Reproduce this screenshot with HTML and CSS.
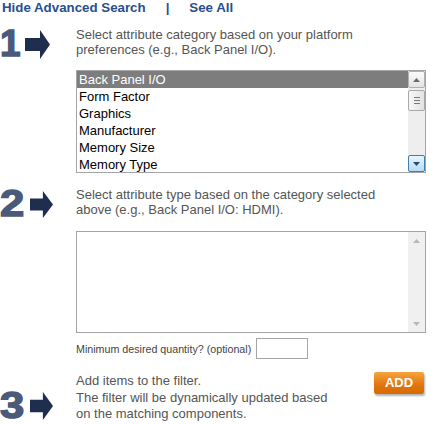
FILE: index.html
```html
<!DOCTYPE html>
<html>
<head>
<meta charset="utf-8">
<link rel="stylesheet" href="styles.css">
</head>
<body>
<div class="page">
  <div class="topnav">
    <a class="navlink" href="#">Hide Advanced Search</a><span class="sep">|</span><a class="navlink" href="#">See All</a>
  </div>

  <div class="step step-one">
    <div class="marker">
      <span class="num num-one">1</span>
      <svg class="arrow" width="25" height="29" viewBox="0 0 25 29"><path d="M0 8 H15 V0 L25 14.5 L15 29 V21 H0 Z" fill="#1f2d4e"/></svg>
    </div>
    <div class="content">
      <p class="hint">Select attribute category based on your platform<br>preferences (e.g., Back Panel I/O).</p>
      <div class="listbox">
        <div class="options">
          <div class="option selected">Back Panel I/O</div>
          <div class="option">Form Factor</div>
          <div class="option">Graphics</div>
          <div class="option">Manufacturer</div>
          <div class="option">Memory Size</div>
          <div class="option">Memory Type</div>
        </div>
        <div class="scrollbar">
          <div class="sb-btn sb-up"><svg width="7" height="4" viewBox="0 0 7 4"><path d="M0 4 L3.5 0 L7 4 Z" fill="#6a6a6a"/></svg></div>
          <div class="sb-thumb"><span class="grip"></span><span class="grip"></span><span class="grip"></span></div>
          <div class="sb-track"></div>
          <div class="sb-btn sb-down"><svg width="7" height="4" viewBox="0 0 7 4"><path d="M0 0 L7 0 L3.5 4 Z" fill="#2a4a6a"/></svg></div>
        </div>
      </div>
    </div>
  </div>

  <div class="step step-two">
    <div class="marker">
      <span class="num num-wide">2</span>
      <svg class="arrow" width="23" height="27" viewBox="0 0 25 29" preserveAspectRatio="none"><path d="M0 8 H14 V0 L25 14.5 L14 29 V21 H0 Z" fill="#1f2d4e"/></svg>
    </div>
    <div class="content">
      <p class="hint">Select attribute type based on the category selected<br>above (e.g., Back Panel I/O: HDMI).</p>
      <div class="listbox">
        <div class="options"></div>
        <div class="scrollbar disabled">
          <div class="sb-dis"><svg width="7" height="4" viewBox="0 0 7 4"><path d="M0 4 L3.5 0 L7 4 Z" fill="#b8b8b8"/></svg></div>
          <div class="sb-dis"><svg width="7" height="4" viewBox="0 0 7 4"><path d="M0 0 L7 0 L3.5 4 Z" fill="#b8b8b8"/></svg></div>
        </div>
      </div>
      <div class="qty">
        <span class="qty-label">Minimum desired quantity? (optional)</span>
        <span class="qty-input"></span>
      </div>
    </div>
  </div>

  <div class="step step-three">
    <div class="marker marker-bottom">
      <span class="num num-wide">3</span>
      <svg class="arrow" width="23" height="28" viewBox="0 0 25 29" preserveAspectRatio="none"><path d="M0 8 H14 V0 L25 14.5 L14 29 V21 H0 Z" fill="#1f2d4e"/></svg>
    </div>
    <div class="content content-row">
      <p class="hint hint-tall">Add items to the filter.<br>The filter will be dynamically updated based<br>on the matching components.</p>
      <span class="add-btn">ADD</span>
    </div>
  </div>
</div>
</body>
</html>
```

FILE: styles.css
```css
html, body {
  margin: 0;
  padding: 0;
  background: #ffffff;
}

.page {
  width: 434px;
  font-family: "Liberation Sans", Arial, sans-serif;
  font-size: 13px;
  color: #555555;
}

.topnav {
  padding-left: 2px;
  line-height: 16px;
  height: 16px;
  margin-bottom: 11px;
  font-weight: bold;
  font-size: 13.3px;
  color: #27508e;
}

.navlink {
  color: #27508e;
  text-decoration: none;
}

.sep {
  margin: 0 20px 0 20px;
  color: #27508e;
}

.step {
  display: flex;
  align-items: flex-start;
}

.marker {
  width: 76px;
  flex: none;
  height: 30px;
  display: flex;
  align-items: center;
  margin-top: 2px;
}

.marker-bottom {
  align-self: flex-end;
  margin-top: 0;
  margin-bottom: 2px;
}

.num {
  font-family: "Liberation Sans", Arial, sans-serif;
  font-weight: bold;
  font-size: 37px;
  line-height: 30px;
  color: #4b5a78;
  -webkit-text-stroke: 1.4px #4b5a78;
  display: inline-block;
  width: 30px;
  transform-origin: left center;
}

.num-one {
  width: 25px;
}

.num-wide {
  transform: scaleX(1.18);
}

.arrow {
  display: block;
  flex: none;
}

.content {
  width: 350px;
  flex: none;
}

.content-row {
  display: flex;
  align-items: flex-start;
}

.hint {
  margin: 0;
  line-height: 15px;
  color: #555555;
}

.hint-tall {
  line-height: 16.5px;
}

.listbox {
  margin-top: 13px;
  height: 101px;
  border: 1px solid #a5a5a5;
  display: flex;
  background: #ffffff;
}

.step-two {
  margin-top: 14px;
}

.step-two .listbox {
  margin-top: 14px;
  height: 100px;
}

.options {
  flex: 1;
  overflow: hidden;
}

.option {
  height: 17px;
  line-height: 17px;
  padding-left: 2px;
  color: #000000;
  white-space: nowrap;
}

.option.selected {
  background: #7d7d7d;
  color: #ffffff;
}

.scrollbar {
  width: 17px;
  flex: none;
  display: flex;
  flex-direction: column;
  background: #eeeeee;
}

.sb-btn {
  height: 17px;
  box-sizing: border-box;
  border: 1px solid #b0b0b0;
  border-radius: 2px;
  background: linear-gradient(#fbfbfb, #e4e4e4);
  display: flex;
  align-items: center;
  justify-content: center;
}

.sb-thumb {
  margin-top: 2px;
  height: 21px;
  box-sizing: border-box;
  border: 1px solid #a8a8a8;
  border-radius: 2px;
  background: linear-gradient(to right, #f6f6f6, #e2e2e2);
  display: flex;
  flex-direction: column;
  align-items: center;
  justify-content: center;
  gap: 2px;
}

.grip {
  display: block;
  width: 6px;
  height: 1px;
  background: #7a7a7a;
}

.sb-track {
  flex: 1;
}

.sb-down {
  border-color: #3c7fb1;
  background: linear-gradient(#e8f5fd, #b5dcf5);
}

.scrollbar.disabled {
  background: #f0f0f0;
  justify-content: space-between;
}

.sb-dis {
  height: 17px;
  display: flex;
  align-items: center;
  justify-content: center;
}

.qty {
  display: flex;
  align-items: center;
  margin-top: 5px;
  height: 21px;
}

.qty-label {
  font-size: 10.7px;
  color: #444444;
}

.qty-input {
  margin-left: 5px;
  width: 52px;
  height: 21px;
  box-sizing: border-box;
  border: 1px solid #a5a5a5;
  background: #ffffff;
}

.step-three {
  margin-top: 14px;
}

.add-btn {
  margin-left: auto;
  margin-right: 2px;
  margin-top: -1px;
  width: 50px;
  height: 22px;
  line-height: 22px;
  text-align: center;
  font-weight: bold;
  font-size: 13px;
  color: #ffffff;
  background: linear-gradient(#f8a43e, #e0750c 60%, #d66a03);
  border-radius: 2px;
  box-shadow: 1px 2px 2px rgba(0, 0, 0, 0.3);
}
```
